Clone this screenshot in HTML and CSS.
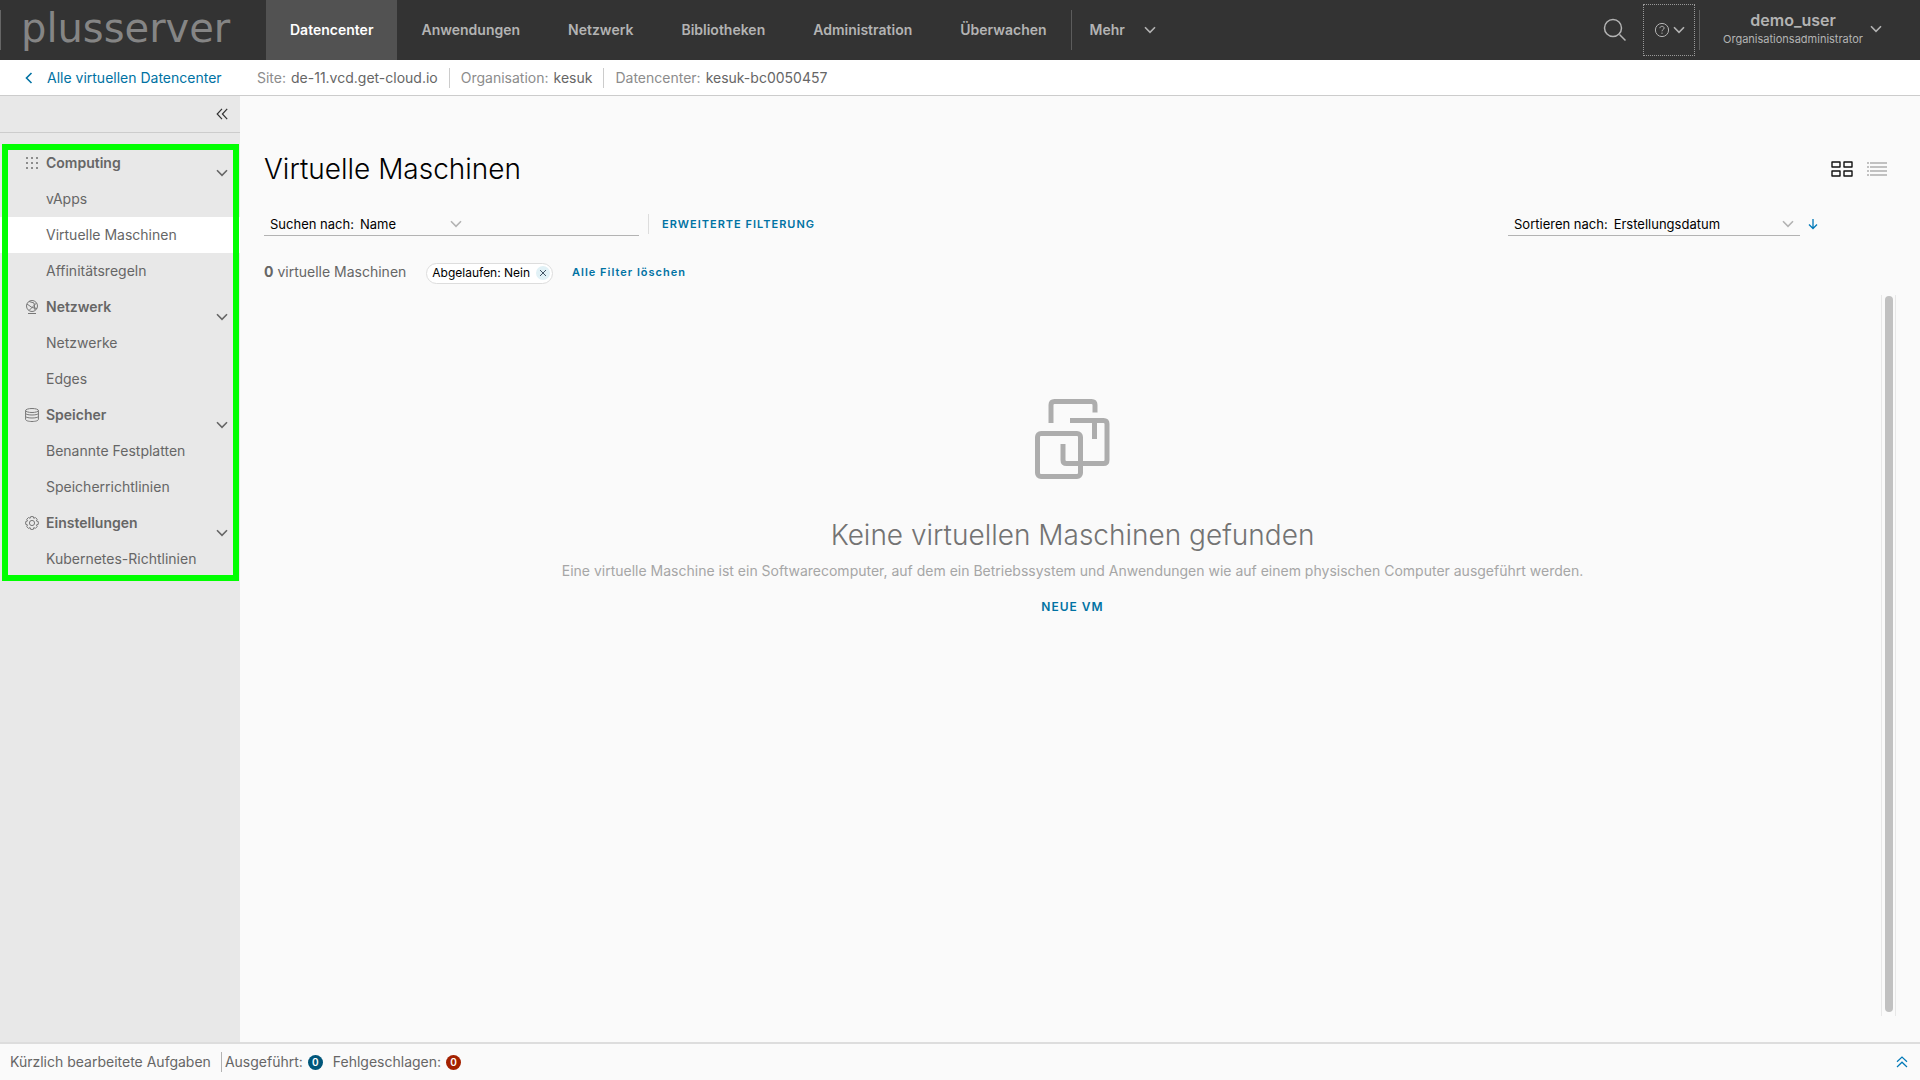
FILE: index.html
```html
<!DOCTYPE html>
<html lang="de">
<head>
<meta charset="utf-8">
<title>Virtuelle Maschinen</title>
<link rel="stylesheet" href="styles.css">
</head>
<body>
<svg class="defs" aria-hidden="true">
  <symbol id="chevron" viewBox="0 0 12 8"><path d="M1 1.2 6 6.4 11 1.2" fill="none" stroke="currentColor" stroke-width="1.6"/></symbol>
</svg>
<header class="topbar">
  <a class="logo" href="#">plusserver</a>
  <nav class="tabs">
    <a class="tab active" href="#">Datencenter</a>
    <a class="tab" href="#">Anwendungen</a>
    <a class="tab" href="#">Netzwerk</a>
    <a class="tab" href="#">Bibliotheken</a>
    <a class="tab" href="#">Administration</a>
    <a class="tab" href="#">Überwachen</a>
  </nav>
  <button class="more">Mehr <svg class="chev"><use href="#chevron"/></svg></button>
  <div class="tools">
    <button class="search-btn" aria-label="Suchen"><svg viewBox="0 0 24 24" width="24" height="24"><circle cx="10" cy="10" r="8.5"/><path d="m16.5 16.5 6 6"/></svg></button>
    <button class="help" aria-label="Hilfe"><svg class="help-icon" viewBox="0 0 16 16"><circle cx="8" cy="8" r="6.6"/><path d="M5.9 6.2C6 4.9 6.9 4.3 8 4.3c1.2 0 2.1.7 2.1 1.8 0 1.5-2.1 1.5-2.1 3.2M8 10.6v1.2"/></svg><svg class="chev"><use href="#chevron"/></svg></button>
    <button class="user"><span class="user-text"><span class="user-name">demo_user</span><span class="user-role">Organisationsadministrator</span></span><svg class="chev"><use href="#chevron"/></svg></button>
  </div>
</header>
<div class="context">
  <a class="back" href="#"><svg viewBox="0 0 8 12" width="8" height="12"><path d="M6.5 1 1.5 6l5 5" fill="none" stroke="currentColor" stroke-width="1.6"/></svg>Alle virtuellen Datencenter</a>
  <dl class="crumbs">
    <div><dt>Site:</dt><dd>de-11.vcd.get-cloud.io</dd></div>
    <div><dt>Organisation:</dt><dd>kesuk</dd></div>
    <div><dt>Datencenter:</dt><dd>kesuk-bc0050457</dd></div>
  </dl>
</div>
<div class="body">
  <aside class="sidebar">
    <div class="collapse"><button aria-label="Seitenleiste einklappen"><svg viewBox="0 0 12 12" width="12" height="12"><path d="M6 .8 1.2 6 6 11.2M11.2.8 6.4 6l4.8 5.2" fill="none" stroke="currentColor" stroke-width="1.2"/></svg></button></div>
    <nav class="side">
      <button class="group"><svg class="gicon dots" viewBox="0 0 14 14"><path d="M1 2h2M6 2h2M11 2h2M1 7h2M6 7h2M11 7h2M1 12h2M6 12h2M11 12h2"/></svg>Computing<svg class="chev"><use href="#chevron"/></svg></button>
      <a href="#">vApps</a>
      <a class="current" href="#">Virtuelle Maschinen</a>
      <a href="#">Affinitätsregeln</a>
      <button class="group"><svg class="gicon" viewBox="0 0 14 14"><circle cx="7" cy="6" r="5.5"/><path d="M3 13.5h8M2 4l5 3.500L11.500 3M7 7.500 4 10.500M7 7.500l5 1M4 1.500l5 1.500 1 7"/></svg>Netzwerk<svg class="chev"><use href="#chevron"/></svg></button>
      <a href="#">Netzwerke</a>
      <a href="#">Edges</a>
      <button class="group"><svg class="gicon" viewBox="0 0 14 14"><ellipse cx="7" cy="2.5" rx="6.4" ry="2"/><path d="M.6 2.500v9c0 1.100 2.900 2 6.400 2s6.400-.9 6.400-2v-9M.6 5.500c1 2 11.800 2 12.800 0M.6 8.500c1 2 11.800 2 12.800 0"/></svg>Speicher<svg class="chev"><use href="#chevron"/></svg></button>
      <a href="#">Benannte Festplatten</a>
      <a href="#">Speicherrichtlinien</a>
      <button class="group"><svg class="gicon" viewBox="0 0 14 14"><circle cx="7" cy="7" r="2.6"/><path d="M5.7.6h2.600l.5 1.700 1.600-.8 1.800 1.800-.8 1.700 1.900.6v2.700l-1.900.6.8 1.700-1.800 1.800-1.600-.8-.5 1.800H5.700l-.6-1.800-1.600.8-1.800-1.800.8-1.700-1.800-.6V5.600l1.800-.6-.8-1.700 1.800-1.800 1.600.8z"/></svg>Einstellungen<svg class="chev"><use href="#chevron"/></svg></button>
      <a href="#">Kubernetes-Richtlinien</a>
      <div class="highlight"></div>
    </nav>
  </aside>
  <main class="main">
    <div class="title-row">
      <h1>Virtuelle Maschinen</h1>
      <div class="views">
        <button aria-label="Kartenansicht"><svg viewBox="0 0 22 16" width="22" height="16"><path d="M1 1h8v5H1zM13 1h8v5h-8zM1 10h8v5H1zM13 10h8v5h-8z" fill="none" stroke="#111" stroke-width="1.4" stroke-linejoin="round"/></svg></button>
        <button aria-label="Listenansicht"><svg viewBox="0 0 20 14" width="20" height="14"><path d="M0 1h2M3 1h17M0 5h2M3 5h17M0 9h2M3 9h17M0 13h2M3 13h17" stroke="#c1c1c1" stroke-width="1.8"/></svg></button>
      </div>
    </div>
    <div class="filters">
      <div class="field search">
        <label for="by">Suchen nach:</label>
        <span class="pick"><select id="by"><option>Name</option></select><svg class="chev"><use href="#chevron"/></svg></span>
        <input type="text" aria-label="Suchbegriff">
      </div>
      <button class="link advanced">ERWEITERTE FILTERUNG</button>
      <div class="field sort">
        <label for="sort">Sortieren nach:</label>
        <span class="pick"><select id="sort"><option>Erstellungsdatum</option></select><svg class="chev"><use href="#chevron"/></svg></span>
      </div>
      <button class="dir" aria-label="Absteigend"><svg viewBox="0 0 10 12" width="10" height="12"><path d="M5 1v9.5M1 6.5l4 4 4-4" fill="none" stroke="currentColor" stroke-width="1.3"/></svg></button>
    </div>
    <div class="summary">
      <p><b>0</b> virtuelle Maschinen</p>
      <span class="pill">Abgelaufen: Nein<button aria-label="Filter entfernen"><svg viewBox="0 0 8 8" width="8" height="8"><path d="m1 1 6 6M7 1 1 7" stroke="#456" stroke-width="1"/></svg></button></span>
      <button class="link clear">Alle Filter löschen</button>
    </div>
    <div class="results">
      <section class="empty">
        <svg class="vm" viewBox="0 0 76 80"><path d="M16 24V6q0-3.500 3.500-3.500h37q3.500 0 3.500 3.500v7.500M35 21.500h33.500q3.500 0 3.500 3.500v36q0 3.500-3.500 3.500h-37q-3.500 0-3.500-3.500V45M59.500 21.500V40"/><rect x="2.5" y="34.5" width="43" height="43" rx="3.5"/></svg>
        <h2>Keine virtuellen Maschinen gefunden</h2>
        <p>Eine virtuelle Maschine ist ein Softwarecomputer, auf dem ein Betriebssystem und Anwendungen wie auf einem physischen Computer ausgeführt werden.</p>
        <button class="link new">NEUE VM</button>
      </section>
      <div class="track"><div class="thumb"></div></div>
    </div>
  </main>
</div>
<footer class="tasks">
  <span class="recent">Kürzlich bearbeitete Aufgaben</span>
  <span class="stat">Ausgeführt: <span class="badge blue">0</span></span>
  <span class="stat">Fehlgeschlagen: <span class="badge red">0</span></span>
  <button aria-label="Aufgaben aufklappen"><svg viewBox="0 0 12 12" width="12" height="12"><path d="M1 5.8 6 1l5 4.8M1 11l5-4.8L11 11" fill="none" stroke="currentColor" stroke-width="1.2"/></svg></button>
</footer>
</body>
</html>
```
FILE: styles.css
```css
* { box-sizing: border-box; }
body {
  margin: 0;
  min-height: 100vh;
  display: flex;
  flex-direction: column;
  font: 14px/20px Inter, sans-serif;
  color: #666;
  background: #fafafa;
}
h1, h2, p, dl, dd { margin: 0; }
a { color: inherit; text-decoration: none; }
button, input, select { font: inherit; color: inherit; background: none; border: 0; padding: 0; margin: 0; }
svg { display: block; flex: none; }
.defs { width: 0; height: 0; position: absolute; }
.chev { width: 12px; height: 8px; }

.topbar { display: flex; height: 60px; background: #333; color: #b3b3b3; }
.logo {
  width: 266px;
  padding-left: 21px;
  font: 400 40px/56px "DejaVu Sans", sans-serif;
  color: #858585;
  background: linear-gradient(#666, #666) 0 50% / 1px 40px no-repeat;
}
.tabs { display: flex; }
.tab { padding: 0 24px; font-weight: 600; line-height: 60px; }
.tab.active { background: #525252; color: #fff; }
.more {
  display: flex;
  align-items: center;
  gap: 19px;
  padding-left: 19px;
  font-weight: 600;
  background: linear-gradient(#5c5c5c, #5c5c5c) 0 50% / 1px 40px no-repeat;
}
.tools { display: flex; align-items: center; margin-left: auto; }
.search-btn svg, .help-icon { fill: none; stroke: #b3b3b3; stroke-width: 1.5; }
.help {
  display: flex;
  align-items: center;
  justify-content: center;
  gap: 3px;
  width: 52px;
  height: 52px;
  margin: 0 4px 0 16px;
  border: 1px dotted #999;
}
.help-icon { width: 16px; height: 16px; stroke-width: 1; }
.user {
  display: flex;
  align-items: center;
  gap: 7px;
  height: 60px;
  padding: 0 38px 2px 24px;
  background: linear-gradient(#5c5c5c, #5c5c5c) 0 50% / 1px 40px no-repeat;
}
.user-text { display: grid; justify-items: center; }
.user-name { font-size: 16px; font-weight: 600; line-height: 20px; }
.user-role { font-size: 11px; line-height: 18px; }

.context { display: flex; align-items: center; height: 36px; background: #fff; border-bottom: 1px solid #ccc; }
.back { display: flex; align-items: center; gap: 14px; width: 257px; padding-left: 25px; color: #0072a3; }
.crumbs { display: flex; }
.crumbs div { display: flex; gap: 5px; padding-right: 11px; }
.crumbs div + div { padding-left: 11px; border-left: 1px solid #ccc; }
.crumbs dt { color: #8c8c8c; }

.body { flex: 1; display: flex; }
.sidebar { width: 240px; flex: none; background: #e8e8e8; }
.collapse { display: flex; justify-content: flex-end; align-items: center; height: 37px; padding-right: 12px; border-bottom: 1px solid #ccc; color: #333; }
.side { position: relative; display: flex; flex-direction: column; margin-top: 12px; }
.side a, .group { height: 36px; line-height: 36px; padding-left: 46px; }
.side .current { background: #fff; }
.group { display: flex; align-items: center; gap: 7px; padding: 0 12px 0 25px; font-weight: 600; text-align: left; }
.group .chev { margin: 20px 0 0 auto; }
.gicon { width: 14px; height: 14px; fill: none; stroke: #777; stroke-width: 1; }
.gicon.dots { stroke-width: 2; stroke: #8c8c8c; }
.highlight { position: absolute; inset: -1px 1px -4px 2px; border: 6px solid #00ff00; pointer-events: none; }

.main { flex: 1; min-width: 0; display: flex; flex-direction: column; padding: 52px 24px 26px; }
.title-row { display: flex; justify-content: space-between; align-items: center; height: 42px; padding-right: 9px; }
h1, h2 { font-size: 28px; font-weight: 300; line-height: 40px; }
h1 { color: #000; }
.views { display: flex; align-items: center; gap: 14px; }
.filters { display: flex; align-items: center; margin-top: 22px; height: 24px; font-size: 13px; color: #000; }
.field { display: flex; align-items: center; gap: 6px; height: 24px; padding: 0 6px; border-bottom: 1px solid #b3b3b3; }
.search { width: 375px; }
.sort { width: 292px; margin-left: auto; }
.pick { display: flex; align-items: center; width: 102px; }
.sort .pick { flex: 1; }
.pick select { flex: 1; min-width: 0; appearance: none; }
.pick .chev { color: #b3b3b3; }
.search input { flex: 1; min-width: 0; }
.link { font-size: 11px; font-weight: 600; letter-spacing: 1px; color: #0072a3; }
.advanced { margin-left: 9px; padding-left: 13px; border-left: 1px solid #ddd; height: 20px; }
.dir { margin: 0 78px 0 8px; color: #0079b8; }
.summary { display: flex; align-items: center; margin-top: 24px; height: 24px; }
.summary b { font-weight: 700; }
.pill {
  display: flex;
  align-items: center;
  gap: 6px;
  height: 21px;
  margin: 2px 19px 0 20px;
  padding: 0 2px 0 5px;
  border: 1px solid #ddd;
  border-radius: 11px;
  background: #fff;
  color: #000;
  font-size: 12px;
}
.pill button { display: grid; place-items: center; width: 14px; height: 14px; border-radius: 50%; background: #e1f1f6; }
.results { flex: 1; display: flex; margin-top: 11px; }
.empty { flex: 1; display: flex; flex-direction: column; align-items: center; padding-top: 104px; }
.vm { width: 76px; height: 80px; fill: none; stroke: #adadad; stroke-width: 5; }
h2 { margin-top: 36px; color: #737373; }
.empty p { margin-top: 6px; color: #a6a6a6; }
.new { margin-top: 16px; font-size: 12px; }
.track { width: 15px; padding: 1px 2px 4px 3px; border: 1px solid #e8e8e8; border-width: 0 1px; display: flex; }
.thumb { flex: 1; border-radius: 4px; background: #c1c1c1; }

.tasks { display: flex; align-items: center; height: 38px; padding: 0 12px 0 10px; border-top: 2px solid #ddd; }
.recent { padding-right: 10px; margin-right: 3px; border-right: 1px solid #b3b3b3; }
.stat { display: flex; align-items: center; gap: 5px; margin-right: 10px; }
.badge { width: 15px; height: 15px; border-radius: 50%; color: #fff; font-size: 10px; font-weight: 600; line-height: 15px; text-align: center; }
.blue { background: #00567a; }
.red { background: #a32100; }
.tasks button { margin-left: auto; color: #0079b8; }
```
